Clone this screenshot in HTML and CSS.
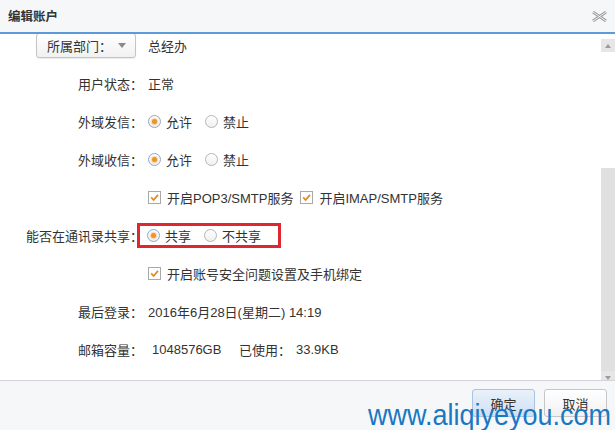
FILE: index.html
```html
<!DOCTYPE html>
<html lang="zh-CN">
<head>
<meta charset="utf-8">
<title>编辑账户</title>
<link rel="stylesheet" href="styles.css">
</head>
<body>
<div class="dialog">
  <header class="hd">
    <span class="title">编辑账户</span>
    <svg class="close" width="15" height="11" viewBox="0 0 15 11">
      <path d="M1 1 L14 10 M14 1 L1 10" stroke="#9a9a9a" stroke-width="2.8" fill="none"/>
      <path d="M1 1 L14 10 M14 1 L1 10" stroke="#f6f7f9" stroke-width="1" fill="none"/>
    </svg>
  </header>
  <div class="bd">
    <div class="content">
      <div class="form">
        <div class="row">
          <div class="lbl"><span class="dd">所属部门：<i class="caret"></i></span></div>
          <div class="val">总经办</div>
        </div>
        <div class="row">
          <div class="lbl">用户状态：</div>
          <div class="val">正常</div>
        </div>
        <div class="row">
          <div class="lbl">外域发信：</div>
          <div class="val group">
            <span class="opt"><span class="radio on"></span>允许</span>
            <span class="opt"><span class="radio"></span>禁止</span>
          </div>
        </div>
        <div class="row">
          <div class="lbl">外域收信：</div>
          <div class="val group">
            <span class="opt"><span class="radio on"></span>允许</span>
            <span class="opt"><span class="radio"></span>禁止</span>
          </div>
        </div>
        <div class="row">
          <div class="lbl"></div>
          <div class="val group wide">
            <span class="opt"><span class="check"><svg width="11" height="11" viewBox="0 0 11 11"><path d="M2.2 5.4 L4.6 8 L9 2.8" stroke="#e8891c" stroke-width="1.8" fill="none"/></svg></span>开启POP3/SMTP服务</span>
            <span class="opt"><span class="check"><svg width="11" height="11" viewBox="0 0 11 11"><path d="M2.2 5.4 L4.6 8 L9 2.8" stroke="#e8891c" stroke-width="1.8" fill="none"/></svg></span>开启IMAP/SMTP服务</span>
          </div>
        </div>
        <div class="row">
          <div class="lbl">能否在通讯录共享：</div>
          <div class="val">
            <div class="group mark">
              <span class="opt"><span class="radio on"></span>共享</span>
              <span class="opt"><span class="radio"></span>不共享</span>
            </div>
          </div>
        </div>
        <div class="row">
          <div class="lbl"></div>
          <div class="val group">
            <span class="opt"><span class="check"><svg width="11" height="11" viewBox="0 0 11 11"><path d="M2.2 5.4 L4.6 8 L9 2.8" stroke="#e8891c" stroke-width="1.8" fill="none"/></svg></span>开启账号安全问题设置及手机绑定</span>
          </div>
        </div>
        <div class="row">
          <div class="lbl">最后登录：</div>
          <div class="val">2016年6月28日(星期二) 14:19</div>
        </div>
        <div class="row">
          <div class="lbl">邮箱容量：</div>
          <div class="val"><span class="cap">1048576GB</span><span class="used">已使用：</span><span class="usedv">33.9KB</span></div>
        </div>
      </div>
    </div>
    <div class="sb">
      <div class="arrow up"></div>
      <div class="track"><div class="thumb"></div></div>
      <div class="arrow down"></div>
    </div>
  </div>
  <footer class="ft">
    <button class="btn primary">确定</button>
    <button class="btn">取消</button>
  </footer>
  <div class="wm">www.aliqiyeyou.com</div>
</div>
</body>
</html>
```

FILE: styles.css
```css
html, body {
  margin: 0;
  padding: 0;
  background: #fff;
}
body {
  font-family: "Liberation Sans", "Noto Sans CJK SC", sans-serif;
  font-size: 13px;
  color: #333;
}
.dialog {
  width: 615px;
  height: 430px;
  display: flex;
  flex-direction: column;
  position: relative;
  overflow: hidden;
}
.hd {
  flex: none;
  background: #f6f7f9;
  border-bottom: 2px solid #5d9bd8;
  display: flex;
  align-items: center;
  justify-content: space-between;
  padding: 0 8px 2px 8px;
  box-sizing: content-box;
  height: 30px;
}
.title {
  font-weight: bold;
  font-size: 12.5px;
  color: #333;
}
.close {
  display: block;
  margin-top: 3px;
}
.bd {
  flex: 1;
  display: flex;
  min-height: 0;
  background: #fff;
}
.content {
  flex: 1;
  overflow: hidden;
}
.form {
  margin-top: -8px;
}
.row {
  height: 38px;
  display: grid;
  grid-template-columns: 143px 1fr;
  column-gap: 5px;
  align-items: center;
}
.lbl {
  text-align: right;
  white-space: nowrap;
}
.val {
  white-space: nowrap;
  display: flex;
  align-items: center;
}
.dd {
  display: inline-flex;
  align-items: center;
  justify-content: space-between;
  width: 100px;
  height: 25px;
  box-sizing: border-box;
  margin-right: 7px;
  padding: 0 9px 0 10px;
  border: 1px solid #c4c4c4;
  border-radius: 3px;
  background: linear-gradient(#ffffff, #f1f1f1);
  box-shadow: 0 1px 1px rgba(0,0,0,0.08);
  text-align: left;
}
.caret {
  width: 0;
  height: 0;
  border-left: 4px solid transparent;
  border-right: 4px solid transparent;
  border-top: 5px solid #8a8a8a;
}
.group {
  display: flex;
  align-items: center;
  gap: 13px;
}
.group.wide {
  gap: 7px;
}
.opt {
  display: inline-flex;
  align-items: center;
  gap: 5px;
}
.radio {
  width: 13px;
  height: 13px;
  box-sizing: border-box;
  border-radius: 50%;
  border: 1px solid #b5b5b5;
  background: linear-gradient(#ffffff, #f0f0f0);
  display: inline-flex;
  align-items: center;
  justify-content: center;
}
.radio.on {
  border-color: #8fa7c8;
}
.radio.on::after {
  content: "";
  width: 5px;
  height: 5px;
  border-radius: 50%;
  background: #ee9420;
  box-shadow: 0 0 1px 1px rgba(238,148,32,0.35);
}
.check {
  width: 13px;
  height: 13px;
  box-sizing: border-box;
  border: 1px solid #a9a9a9;
  background: #fff;
  display: inline-flex;
  align-items: center;
  justify-content: center;
  margin-right: 1px;
}
.check svg {
  display: block;
}
.mark {
  margin-left: -11px;
  height: 25px;
  box-sizing: border-box;
  border: 3px solid #e0262e;
  padding: 0 17px 0 7px;
}
.cap {
  display: inline-block;
  width: 91px;
  padding-left: 4px;
  box-sizing: border-box;
}
.used {
  display: inline-block;
  width: 57px;
}
.sb {
  width: 14px;
  flex: none;
  display: flex;
  flex-direction: column;
  padding: 5px 0 3px;
}
.arrow {
  height: 13px;
  flex: none;
  background: #e6e6e6;
  display: flex;
  align-items: center;
  justify-content: center;
}
.arrow::after {
  content: "";
  width: 0;
  height: 0;
  border-left: 3px solid transparent;
  border-right: 3px solid transparent;
}
.arrow.up::after {
  border-bottom: 4px solid #9c9c9c;
}
.arrow.down::after {
  border-top: 4px solid #9c9c9c;
}
.track {
  flex: 1;
  background: #fff;
}
.thumb {
  margin-top: 116px;
  height: 203px;
  background: #e0e0e0;
}
.ft {
  height: 41px;
  flex: none;
  border-top: 1px solid #d3d4d7;
  background: #f6f7f9;
  display: flex;
  justify-content: flex-end;
  align-items: flex-start;
  gap: 9px;
  padding: 8px 8px 0 0;
}
.btn {
  width: 63px;
  height: 28px;
  font-family: "Liberation Sans", "Noto Sans CJK SC", sans-serif;
  font-size: 13px;
  color: #333;
  border: 1px solid #c6c6c6;
  border-radius: 3px;
  background: linear-gradient(#ffffff, #f1f1f1);
  padding: 0;
}
.btn.primary {
  border-color: #a9c3e0;
  background: linear-gradient(#e9f1fb, #cfe0f4);
}
.wm {
  position: absolute;
  left: 368px;
  top: 398px;
  font-family: "Liberation Sans", sans-serif;
  font-size: 27px;
  line-height: 30px;
  color: #1a78c2;
  white-space: nowrap;
  transform-origin: left top;
  transform: scaleY(1.12);
}
```
